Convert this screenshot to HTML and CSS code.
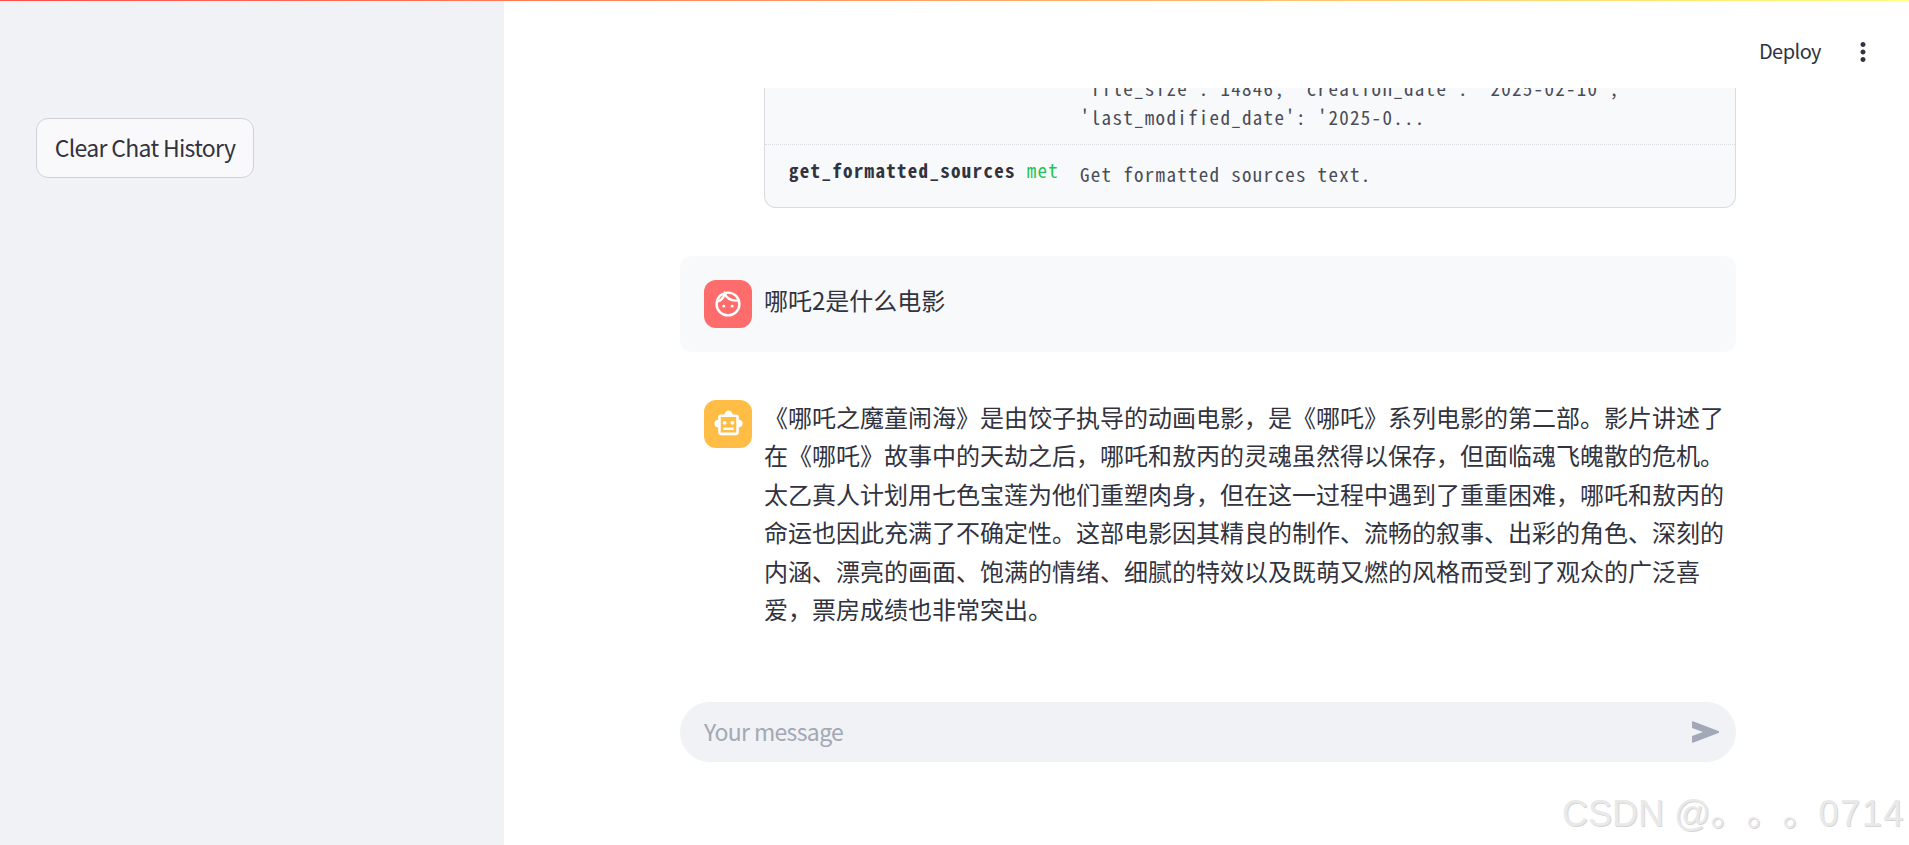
FILE: index.html
```html
<!DOCTYPE html>
<html lang="zh">
<head>
<meta charset="utf-8">
<title>Chat</title>
<link rel="stylesheet" href="styles.css">
</head>
<body>
<div class="decoration"></div>
<div class="app">
  <aside class="sidebar">
    <button class="clear-btn">Clear Chat History</button>
  </aside>
  <main class="main">
    <header class="topbar">
      <span class="deploy">Deploy</span>
      <svg class="more" viewBox="0 0 24 24"><path d="M12 8c1.1 0 2-.9 2-2s-.9-2-2-2-2 .9-2 2 .9 2 2 2zm0 2c-1.1 0-2 .9-2 2s.9 2 2 2 2-.9 2-2-.9-2-2-2zm0 6c-1.1 0-2 .9-2 2s.9 2 2 2 2-.9 2-2-.9-2-2-2z"/></svg>
    </header>
    <section class="feed">
      <div class="card">
        <div class="row row-attr">
          <div class="attr-name"></div>
          <div class="attr-desc">'file_size': 14846, 'creation_date': '2025-02-10',<br>'last_modified_date': '2025-0...</div>
        </div>
        <div class="row row-method">
          <div class="attr-name"><b>get_formatted_sources</b> <span class="kind">method</span></div>
          <div class="attr-desc">Get formatted sources text.</div>
        </div>
      </div>
      <div class="msg msg-user">
        <div class="avatar avatar-user">
          <svg class="face" viewBox="0 0 30 30"><circle class="face-line" cx="15" cy="15" r="11.4"/><path class="face-line" d="M4.2 12.6C7.6 11.8 10.6 8.6 11.8 4.8 14 9.6 19 12.4 25.8 11.4"/><circle cx="10.8" cy="17.2" r="1.4"/><circle cx="19.2" cy="17.2" r="1.4"/></svg>
        </div>
        <p class="msg-text">哪吒2是什么电影</p>
      </div>
      <div class="msg msg-bot">
        <div class="avatar avatar-bot">
          <svg viewBox="0 0 24 24"><path d="M20 9V7c0-1.1-.9-2-2-2h-3c0-1.66-1.34-3-3-3S9 3.34 9 5H6c-1.1 0-2 .9-2 2v2c-1.66 0-3 1.34-3 3s1.34 3 3 3v4c0 1.1.9 2 2 2h12c1.1 0 2-.9 2-2v-4c1.66 0 3-1.34 3-3s-1.34-3-3-3zm-2 10H6V7h12v12zm-9-6c-.83 0-1.5-.67-1.5-1.5S8.17 10 9 10s1.5.67 1.5 1.5S9.83 13 9 13zm7.5-1.5c0 .83-.67 1.5-1.5 1.5s-1.5-.67-1.5-1.5.67-1.5 1.5-1.5 1.5.67 1.5 1.5zM8 15h8v2H8v-2z"/></svg>
        </div>
        <p class="msg-text">《哪吒之魔童闹海》是由饺子执导的动画电影，是《哪吒》系列电影的第二部。影片讲述了在《哪吒》故事中的天劫之后，哪吒和敖丙的灵魂虽然得以保存，但面临魂飞魄散的危机。太乙真人计划用七色宝莲为他们重塑肉身，但在这一过程中遇到了重重困难，哪吒和敖丙的命运也因此充满了不确定性。这部电影因其精良的制作、流畅的叙事、出彩的角色、深刻的内涵、漂亮的画面、饱满的情绪、细腻的特效以及既萌又燃的风格而受到了观众的广泛喜爱，票房成绩也非常突出。</p>
      </div>
    </section>
    <div class="composer">
      <span class="placeholder">Your message</span>
      <svg class="send" viewBox="0 0 27 22"><path d="M1 .2 26.4 10a1 1 0 0 1 0 2L1 21.8c-.6.2-1-.2-1-.8v-6l11-4L0 7V1C0 .4.4 0 1 .2z"/></svg>
    </div>
  </main>
</div>
<div class="watermark">CSDN @。。。<span class="watermark-id">0714</span></div>
</body>
</html>
```
FILE: styles.css
```css
* { box-sizing: border-box; }
html, body { margin: 0; height: 845px; overflow: hidden; background: #fff; }
body {
  position: relative;
  color: #31333f;
  font-family: "Noto Sans CJK SC", "Noto Sans", sans-serif;
  font-size: 24px;
}
.decoration {
  position: absolute;
  top: 0; left: 0; right: 0;
  height: 1px;
  background: linear-gradient(90deg, #ff4b4b, #fffd80);
}
.app { display: flex; height: 845px; }
.sidebar {
  flex: 0 0 504px;
  background: #f0f2f6;
  padding: 118px 36px 0;
}
.clear-btn {
  display: block;
  width: 218px;
  height: 60px;
  padding: 0 0 2px;
  background: #f9f9fb;
  border: 1px solid #d0d1d6;
  border-radius: 12px;
  color: #31333f;
  font: inherit;
  font-size: 23px;
  letter-spacing: -0.68px;
  line-height: 1;
}
.main { flex: 1; display: flex; flex-direction: column; padding: 0 173px 0 176px; min-width: 0; }
.topbar {
  flex: 0 0 88px;
  display: flex;
  align-items: flex-start;
  justify-content: flex-end;
  padding-top: 35px;
  margin-right: -173px;
  padding-right: 31px;
}
.deploy { font-size: 20px; letter-spacing: -0.55px; line-height: 32px; margin-right: 27px; }
.more { width: 30px; height: 30px; margin-top: 2px; fill: #31333f; }
.feed { flex: 0 0 614px; overflow: hidden; }
.card {
  margin: -14px 0 48.4px 84px;
  background: #f8f9fb;
  border: 1px solid #d9dbe0;
  border-top: 0;
  border-radius: 0 0 12px 12px;
  font-family: "Noto Sans Mono CJK SC", "DejaVu Sans Mono", monospace;
  font-size: 19px;
  letter-spacing: 1.3px;
  line-height: 28.8px;
  color: #4a4c57;
}
.row { display: flex; padding: 0 24px 0 24px; }
.row-attr { padding-bottom: 12px; border-bottom: 1px dotted #dcdde1; }
.row-method { height: 62px; padding-top: 11px; }
.attr-name {
  flex: 0 0 269px;
  width: 269px;
  margin-right: 22px;
  overflow: hidden;
  white-space: nowrap;
  color: #31333f;
}
.row-method .attr-desc { padding-top: 4px; }
.kind { color: #21c354; }
.msg { display: flex; align-items: flex-start; gap: 12px; padding: 0 10px 0 24px; }
.msg-user { height: 96px; padding-top: 24px; background: #f8f9fb; border-radius: 12px; margin-bottom: 48px; }
.avatar {
  flex: 0 0 48px;
  height: 48px;
  border-radius: 12px;
  display: flex;
  align-items: center;
  justify-content: center;
}
.avatar svg { width: 31px; height: 31px; fill: #fff; }
.avatar-user { background: #ff6c6c; }
.avatar-bot { background: #ffbd45; }
.avatar .face { width: 30px; height: 30px; }
.face-line { fill: none; stroke: #fff; stroke-width: 2.4; stroke-linecap: round; }
.msg-text { margin: 0; font-size: 24px; line-height: 38.4px; }
.msg-user .msg-text { margin-top: 1px; }
.msg-bot .msg-text { margin-top: -2px; }
.composer {
  flex: 0 0 60px;
  display: flex;
  align-items: center;
  justify-content: space-between;
  padding: 0 17px 0 24px;
  background: #f0f2f6;
  border-radius: 30px;
}
.placeholder { color: #a3a8b4; font-size: 23px; letter-spacing: -0.65px; line-height: 1; margin-top: -2px; }
.send { width: 27px; height: 22px; fill: #a3a8b8; }
.watermark {
  position: absolute;
  right: 4px;
  bottom: 10px;
  font-family: "Liberation Sans", "Noto Sans CJK SC", sans-serif;
  font-size: 36px;
  line-height: 42px;
  white-space: nowrap;
  text-spacing-trim: space-all;
  color: #e9e9e9;
  text-shadow: 1px 1px 0 #d6d6d6;
}
.watermark-id { letter-spacing: 1.6px; }
```
